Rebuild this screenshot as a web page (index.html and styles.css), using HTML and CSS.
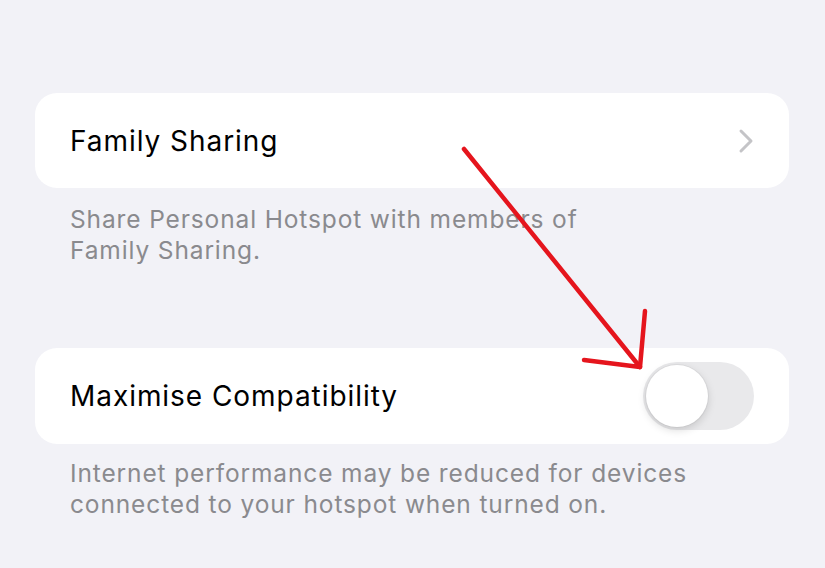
FILE: index.html
```html
<!DOCTYPE html>
<html lang="en">
<head>
  <meta charset="UTF-8">
  <meta name="viewport" content="width=device-width, initial-scale=1.0">
  <title>Personal Hotspot</title>
  <link rel="stylesheet" href="styles.css">
</head>
<body>

<main class="settings">
  <div class="group">
    <div class="row">
      <span class="label">Family Sharing</span>
      <svg class="chevron" width="16" height="26" viewBox="0 0 16 26">
        <path d="M3 3 L13 13 L3 23" fill="none" stroke="#c4c4c7" stroke-width="3" stroke-linecap="round" stroke-linejoin="round"/>
      </svg>
    </div>
  </div>
  <p class="note">Share Personal Hotspot with members of<br>Family Sharing.</p>

  <div class="group second">
    <div class="row">
      <span class="label">Maximise Compatibility</span>
      <div class="toggle"><div class="knob"></div></div>
    </div>
  </div>
  <p class="note">Internet performance may be reduced for devices<br>connected to your hotspot when turned on.</p>
</main>

<svg class="arrow" width="825" height="568" viewBox="0 0 825 568">
  <g fill="none" stroke="#e5151d" stroke-width="4.5" stroke-linecap="round" stroke-linejoin="round">
    <path d="M464 149 L640 367"/>
    <path d="M584 360 L640 367 L645 311"/>
  </g>
</svg>

</body>
</html>
```

FILE: styles.css
```css
body { margin: 0; background: #f2f2f7; font-family: Inter, "Noto Sans", sans-serif; }
.settings { padding: 93px 36px 0 35px; }
.group { background: #fff; border-radius: 22px; }
.group.second { margin-top: 82px; }
.row { height: 95px; display: flex; align-items: center; justify-content: space-between; padding: 0 35px; }
.second .row { height: 96px; }
.label { font-size: 28px; color: #000; letter-spacing: 0.95px; }
.note { margin: 16px 0 0; padding: 0 35px; font-size: 24.5px; line-height: 31px; color: #8a8a8e; letter-spacing: 0.87px; }
.second + .note { margin-top: 14px; }
.toggle { width: 111px; height: 68px; border-radius: 34px; background: #e9e9eb; position: relative; }
.knob { position: absolute; left: 3px; top: 3px; width: 62px; height: 62px; border-radius: 50%; background: #fff; box-shadow: 0 3px 8px rgba(0,0,0,0.15), 0 0 0 1px rgba(0,0,0,0.04); }
.arrow { position: absolute; left: 0; top: 0; pointer-events: none; }
```
